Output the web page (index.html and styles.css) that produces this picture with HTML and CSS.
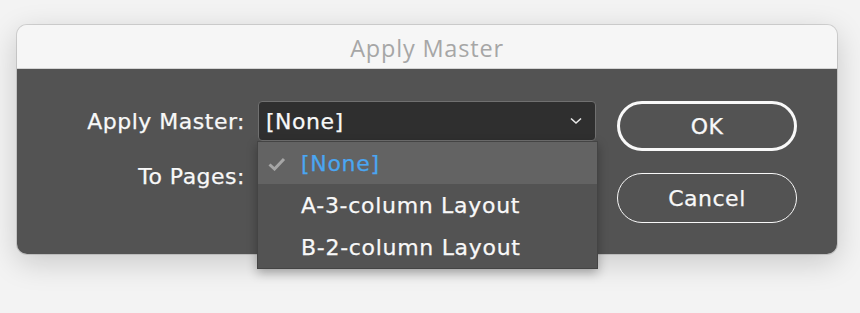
FILE: index.html
```html
<!DOCTYPE html>
<html lang="en">
<head>
    <meta charset="UTF-8">
    <meta name="viewport" content="width=device-width, initial-scale=1.0">
    <title>Apply Master</title>
    <link rel="stylesheet" href="styles.css">
</head>
<body>
    <div class="dialog">
        <div class="titlebar">Apply Master</div>
        <div class="content">
            <div class="form">
                <label class="label">Apply Master:</label>
                <div class="select">
                    <span>[None]</span>
                    <svg class="chevron" width="12" height="8" viewBox="0 0 12 8">
                        <path d="M1 1.5 L6 6 L11 1.5" fill="none" stroke="#e8e8e8" stroke-width="1.6"/>
                    </svg>
                    <!-- open menu -->
                    <ul class="menu">
                        <li class="item selected">
                            <svg class="check" width="18" height="14" viewBox="0 0 18 14">
                                <path d="M1.5 7.5 L6.5 12 L16 2" fill="none" stroke="#a6a6a6" stroke-width="3"/>
                            </svg>
                            <span>[None]</span>
                        </li>
                        <li class="item"><span>A-3-column Layout</span></li>
                        <li class="item"><span>B-2-column Layout</span></li>
                    </ul>
                </div>
                <label class="label">To Pages:</label>
                <div class="field"></div>
            </div>
            <div class="buttons">
                <button class="btn btn-default">OK</button>
                <button class="btn">Cancel</button>
            </div>
        </div>
    </div>
</body>
</html>
```

FILE: styles.css
```css
* {
    margin: 0;
    padding: 0;
    box-sizing: border-box;
}

body {
    font-family: 'DejaVu Sans', Verdana, sans-serif;
    background: #f3f3f3;
    min-height: 100vh;
    padding: 25px 23px 0 17px;
}

.dialog {
    width: 820px;
    height: 229px;
    border-radius: 10px;
    box-shadow: 0 8px 30px rgba(0,0,0,0.18), 0 0 0 1px rgba(0,0,0,0.12);
    display: flex;
    flex-direction: column;
}

.titlebar {
    height: 44px;
    background: #f6f6f6;
    border-bottom: 1px solid #d4d4d4;
    border-radius: 10px 10px 0 0;
    text-align: center;
    color: #a6a6a6;
    font-family: 'Open Sans', sans-serif;
    font-size: 23.5px;
    letter-spacing: 0.8px;
    line-height: 46px;
}

.content {
    flex: 1;
    background: #535353;
    border-radius: 0 0 10px 10px;
    display: flex;
    padding: 32px 0 0 0;
}

.form {
    display: grid;
    grid-template-columns: 228px 338px;
    grid-auto-rows: 40px;
    column-gap: 13px;
    row-gap: 15px;
    align-items: center;
}

.label {
    text-align: right;
    color: #f8f8f8;
    font-size: 22px;
    letter-spacing: 0.5px;
    -webkit-text-stroke: 0.25px #f8f8f8;
}

.select {
    position: relative;
    height: 40px;
    background: #2f2f2f;
    border: 1px solid #707070;
    border-radius: 4px;
    color: #f8f8f8;
    font-size: 22px;
    letter-spacing: 0.5px;
    -webkit-text-stroke: 0.25px #f8f8f8;
    display: flex;
    align-items: center;
    justify-content: space-between;
    padding: 0 13px 0 7px;
}

.menu {
    position: absolute;
    top: 39px;
    left: -2px;
    width: 341px;
    list-style: none;
    background: #535353;
    border: 1px solid #444;
    box-shadow: 0 4px 10px rgba(0,0,0,0.3);
}

.item {
    height: 42px;
    display: flex;
    align-items: center;
    padding-left: 43px;
    color: #f8f8f8;
    font-size: 22px;
    letter-spacing: 0.7px;
    -webkit-text-stroke: 0.25px currentColor;
    position: relative;
}

.item.selected {
    background: #636363;
    color: #4aa6f2;
}

.check {
    position: absolute;
    left: 10px;
    top: 15px;
}

.buttons {
    display: flex;
    flex-direction: column;
    gap: 22px;
    margin-left: 21px;
}

.btn {
    width: 180px;
    height: 50px;
    border-radius: 25px;
    border: 1.5px solid #f8f8f8;
    background: transparent;
    color: #f8f8f8;
    font-family: inherit;
    font-size: 22px;
    letter-spacing: 0.5px;
    -webkit-text-stroke: 0.25px #f8f8f8;
}

.btn-default {
    border-width: 3px;
}
```
